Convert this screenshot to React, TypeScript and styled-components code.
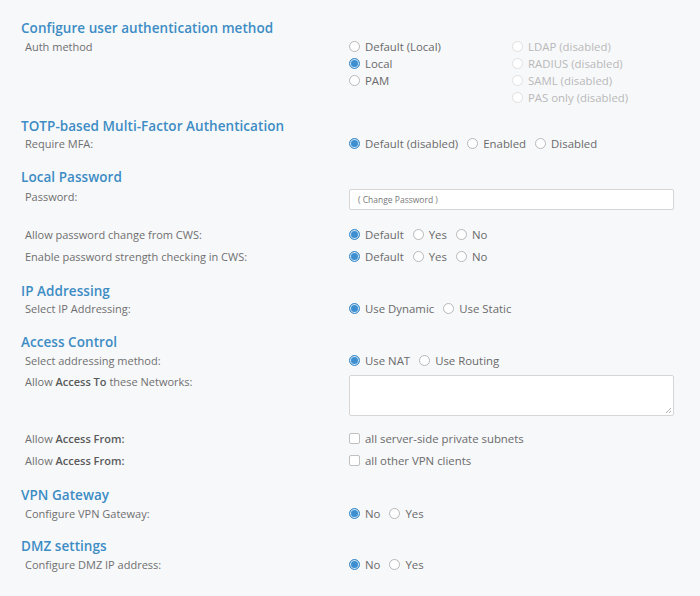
import React from "react";
import styled, { createGlobalStyle } from "styled-components";

const Global = createGlobalStyle`
  html, body { margin: 0; padding: 0; background: #f7f8fa; }
  body { font-family: "Open Sans", "Liberation Sans", sans-serif; }
`;

const Page = styled.div`
  width: 700px;
  height: 596px;
  overflow: hidden;
  display: flex;
  flex-direction: column;
  padding: 0 0 0 21px;
  box-sizing: border-box;
`;

const Heading = styled.div<{ $mt: number }>`
  margin-top: ${(p) => p.$mt}px;
  height: 18px;
  line-height: 18px;
  font-size: 13.5px;
  font-weight: 600;
  color: #3d8cc4;
  letter-spacing: 0.05px;
`;

const Row = styled.div<{ $mt: number }>`
  margin-top: ${(p) => p.$mt}px;
  display: grid;
  grid-template-columns: 328px 325px;
  align-items: start;
`;

const Label = styled.div<{ $top?: number }>`
  padding-left: 4px;
  margin-top: ${(p) => p.$top ?? 0}px;
  font-size: 11px;
  line-height: 17px;
  color: #6f6f6f;
  b { font-weight: 600; color: #5a5a5a; }
`;

const Inline = styled.div`
  display: flex;
  gap: 9px;
`;

const Columns = styled.div`
  display: grid;
  grid-template-columns: 163px 1fr;
`;

const Stack = styled.div`
  display: flex;
  flex-direction: column;
`;

const Opt = styled.label<{ $disabled?: boolean }>`
  display: flex;
  align-items: center;
  gap: 5px;
  height: 17px;
  font-size: 11.4px;
  color: ${(p) => (p.$disabled ? "#b9b9b9" : "#6a6a6a")};
  white-space: nowrap;
`;

const Radio = styled.span<{ $on?: boolean; $disabled?: boolean }>`
  width: 11px;
  height: 11px;
  border-radius: 50%;
  box-sizing: border-box;
  border: 1px solid ${(p) => (p.$on ? "#3d8fd0" : p.$disabled ? "#e0e0e0" : "#b8b8b8")};
  background: ${(p) => (p.$on ? "#3d8fd0" : "#fff")};
  box-shadow: ${(p) => (p.$on ? "inset 0 0 0 1px #d9e9f6" : "none")};
  flex: none;
`;

const Check = styled.span`
  width: 11px;
  height: 11px;
  border-radius: 2px;
  box-sizing: border-box;
  border: 1px solid #c0c0c0;
  background: #fff;
  flex: none;
`;

const Input = styled.div`
  height: 21px;
  margin-top: 3px;
  box-sizing: border-box;
  border: 1px solid #d6d6d6;
  border-radius: 2px;
  background: #fff;
  font-size: 8.5px;
  color: #777;
  line-height: 19px;
  padding-left: 8px;
`;

const TextArea = styled.div`
  height: 41px;
  margin-top: 2px;
  box-sizing: border-box;
  border: 1px solid #d6d6d6;
  border-radius: 2px;
  background: #fff;
  position: relative;
`;

const Grip = styled.svg`
  position: absolute;
  right: 1px;
  bottom: 1px;
`;

type O = { t: string; on?: boolean; d?: boolean };
const R = ({ t, on, d }: O) => (
  <Opt $disabled={d}>
    <Radio $on={on} $disabled={d} />
    {t}
  </Opt>
);
const Radios = ({ opts }: { opts: O[] }) => (
  <Inline>
    {opts.map((o) => (
      <R key={o.t} {...o} />
    ))}
  </Inline>
);
const dny: O[] = [{ t: "Default", on: true }, { t: "Yes" }, { t: "No" }];

export default function App() {
  return (
    <Page>
      <Global />
      <Heading $mt={19}>Configure user authentication method</Heading>
      <Row $mt={1}>
        <Label>Auth method</Label>
        <Columns>
          <Stack>
            <R t="Default (Local)" />
            <R t="Local" on />
            <R t="PAM" />
          </Stack>
          <Stack>
            <R t="LDAP (disabled)" d />
            <R t="RADIUS (disabled)" d />
            <R t="SAML (disabled)" d />
            <R t="PAS only (disabled)" d />
          </Stack>
        </Columns>
      </Row>
      <Heading $mt={11}>TOTP-based Multi-Factor Authentication</Heading>
      <Row $mt={0}>
        <Label>Require MFA:</Label>
        <Radios opts={[{ t: "Default (disabled)", on: true }, { t: "Enabled" }, { t: "Disabled" }]} />
      </Row>
      <Heading $mt={16}>Local Password</Heading>
      <Row $mt={0}>
        <Label $top={2}>Password:</Label>
        <Input>( Change Password )</Input>
      </Row>
      <Row $mt={16}>
        <Label>Allow password change from CWS:</Label>
        <Radios opts={dny} />
      </Row>
      <Row $mt={5}>
        <Label>Enable password strength checking in CWS:</Label>
        <Radios opts={dny} />
      </Row>
      <Heading $mt={17}>IP Addressing</Heading>
      <Row $mt={0}>
        <Label>Select IP Addressing:</Label>
        <Radios opts={[{ t: "Use Dynamic", on: true }, { t: "Use Static" }]} />
      </Row>
      <Heading $mt={16}>Access Control</Heading>
      <Row $mt={1}>
        <Label>Select addressing method:</Label>
        <Radios opts={[{ t: "Use NAT", on: true }, { t: "Use Routing" }]} />
      </Row>
      <Row $mt={4}>
        <Label $top={0}>
          Allow <b>Access To</b> these Networks:
        </Label>
        <TextArea>
          <Grip width="7" height="7" viewBox="0 0 7 7">
            <path d="M6 1L1 6M6 4L4 6" stroke="#999" strokeWidth="0.8" />
          </Grip>
        </TextArea>
      </Row>
      <Row $mt={14}>
        <Label>
          Allow <b>Access From:</b>
        </Label>
        <Opt>
          <Check />
          all server-side private subnets
        </Opt>
      </Row>
      <Row $mt={5}>
        <Label>
          Allow <b>Access From:</b>
        </Label>
        <Opt>
          <Check />
          all other VPN clients
        </Opt>
      </Row>
      <Heading $mt={17}>VPN Gateway</Heading>
      <Row $mt={1}>
        <Label>Configure VPN Gateway:</Label>
        <Radios opts={[{ t: "No", on: true }, { t: "Yes" }]} />
      </Row>
      <Heading $mt={15}>DMZ settings</Heading>
      <Row $mt={1}>
        <Label>Configure DMZ IP address:</Label>
        <Radios opts={[{ t: "No", on: true }, { t: "Yes" }]} />
      </Row>
    </Page>
  );
}
